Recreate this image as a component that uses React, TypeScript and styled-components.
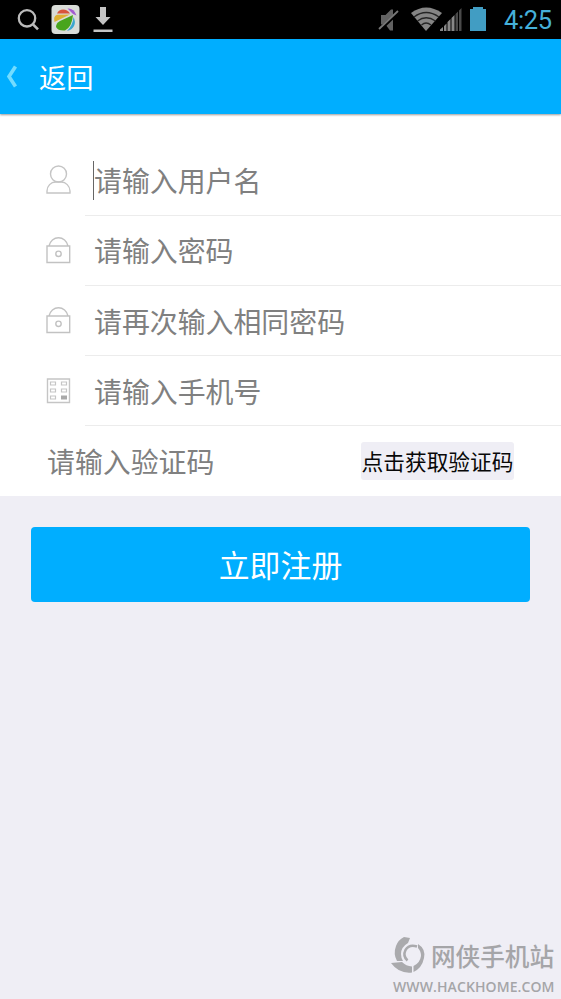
import React from 'react';
import styled, { createGlobalStyle } from 'styled-components';

const GlobalStyle = createGlobalStyle`
  * { box-sizing: border-box; }
  body {
    margin: 0;
    background: #efeef5;
    font-family: "Noto Sans CJK SC", "Noto Sans", sans-serif;
  }
`;

const Screen = styled.div`
  width: 561px;
  height: 999px;
  display: flex;
  flex-direction: column;
  background: #efeef5;
  overflow: hidden;
`;

const StatusBar = styled.div`
  height: 39px;
  flex: none;
  display: flex;
  justify-content: space-between;
  background: #000;
`;

const StatusGroup = styled.div`
  display: flex;
`;

const Clock = styled.span`
  width: 58px;
  padding-left: 1px;
  font: 25.5px/41px Roboto, sans-serif;
  letter-spacing: -0.35px;
  color: #45b0da;
`;

const Header = styled.header`
  height: 75px;
  flex: none;
  display: flex;
  align-items: center;
  background: #00aeff;
  box-shadow: 0 1px 2px rgba(0, 0, 0, 0.4);
  z-index: 1;
`;

const BackIcon = styled.svg`
  width: 39px;
  height: 75px;
  flex: none;
`;

const BackLabel = styled.span`
  padding-bottom: 1px;
  font-size: 27.2px;
  line-height: 74px;
  color: #fff;
`;

const Form = styled.form`
  flex: none;
  margin: 0;
  padding-top: 31px;
  background: #fff;
`;

const Row = styled.div<{ $height: number }>`
  height: ${(p) => p.$height}px;
  display: flex;
`;

const IconCell = styled.div`
  width: 85px;
  flex: none;
  padding: 19px 0 0 44px;
`;

const Field = styled.div`
  flex: 1;
  padding-left: 8px;
  border-bottom: 1px solid #ececec;
  display: flex;
  align-items: center;
`;

const Caret = styled.i`
  width: 1px;
  height: 39px;
  margin-right: -1px;
  background: #666;
`;

const Placeholder = styled.span<{ $lift?: number }>`
  margin-left: 1px;
  padding-bottom: ${(p) => p.$lift ?? 0}px;
  font-size: 27.9px;
  line-height: 40px;
  white-space: nowrap;
  color: #808080;
`;

const CodeRow = styled.div`
  height: 70px;
  display: flex;
  align-items: center;
  justify-content: space-between;
  padding: 0 47px 0 46px;
`;

const CodeButton = styled.button`
  width: 153px;
  height: 38px;
  padding: 0;
  border: 0;
  border-radius: 3px;
  background: #efeef5;
  font-family: inherit;
  font-size: 21.7px;
  line-height: 38px;
  white-space: nowrap;
  color: #080808;
`;

const SubmitButton = styled.button`
  width: 499px;
  height: 75px;
  flex: none;
  margin: 31px 0 0 31px;
  padding: 0 0 2px;
  border: 0;
  border-radius: 4px;
  background: #00aeff;
  font-family: inherit;
  font-size: 30.9px;
  line-height: 73px;
  color: #fff;
`;

const Watermark = styled.footer`
  margin-top: auto;
  height: 66px;
  padding-left: 390px;
  color: #a5a5a8;
`;

const Brand = styled.div`
  height: 43px;
  display: flex;
  align-items: center;
`;

const BrandName = styled.span`
  margin-left: 4px;
  font-size: 24.6px;
  font-weight: 500;
  line-height: 42px;
  white-space: nowrap;
`;

const BrandUrl = styled.div`
  padding-left: 3px;
  font: 600 14px/21px "Open Sans", sans-serif;
  letter-spacing: 0.1px;
  white-space: nowrap;
`;

const LeftStatusIcons = () => (
  <svg width="120" height="39" viewBox="0 0 120 39" fill="none">
    <circle cx="27" cy="18.3" r="8.2" stroke="#bbb" strokeWidth="2.3" />
    <path d="M33 24.3l5 5" stroke="#bbb" strokeWidth="2.6" />
    <rect x="51.5" y="5" width="28" height="29" rx="4" fill="#d9dcd8" />
    <path d="M57 13.500C59 8 67 8 70 13.500Z" fill="#d8543c" />
    <path d="M67.500 8.500Q74 8 76.500 15.500L73 14Z" fill="#a35bd0" />
    <path d="M54.500 22Q53 16 57 14.800L70 14.500Z" fill="#ddb032" />
    <path d="M56 27Q56 23 60 21L73 15Q72 27 65 30.500Q58 31 56 27Z" fill="#48a51d" />
    <path d="M67 31Q73 25 73.500 17Q76 22 74 26Q72 30 67 31Z" fill="#3aa6cf" />
    <path d="M100 7h6v10h4.500l-7.500 8-7.500-8h4.500zM93.500 29.500h19v2.500h-19z" fill="#c4c4c4" />
  </svg>
);

const RightStatusIcons = () => (
  <svg width="125" height="39" viewBox="0 0 125 39" fill="none">
    <path d="M3 15h4.500l5.500-5.500h2v21h-3l-4.500-6H3z" fill="#626262" />
    <path d="M1.500 30l19-18" stroke="#000" strokeWidth="3.500" />
    <path d="M1 29l19-18" stroke="#777" strokeWidth="1.8" />
    <path d="M33 13Q48 2 64 13L48 31z" fill="#858585" />
    <path d="M36 17Q48 8 61 17M39.500 21Q48 14.500 57.500 21M43.500 25Q48 21 53 25" stroke="#252525" strokeWidth="1.3" />
    <path d="M62 31v-1.500l3-2.500v4zM66 31v-5l2.500-2.500V31zM69.500 31v-9l3-3v12zM73.500 31V18l3-3v16z" fill="#888" />
    <path d="M77.500 31V14l2.500-2.500V31zM81 31V10.500l2.500-2.500v23z" fill="#494949" />
    <path d="M92 9h3V7h10v2h3v22H92z" fill="#419dc3" />
  </svg>
);

const UserIcon = () => (
  <svg width="28" height="32" viewBox="0 0 28 32" fill="none" stroke="#c5c5c5" strokeWidth="1.4">
    <circle cx="14.500" cy="10" r="8" />
    <path d="M3 29v-2c0-5 4-9 8.500-9h6c4 0 8.500 4 8.500 9v2z" />
  </svg>
);

const LockIcon = () => (
  <svg width="28" height="32" viewBox="0 0 28 32" fill="none" stroke="#c2c2c2" strokeWidth="1.4">
    <path d="M3 11h22.700v16.500H3zM5 11c1-5 5-8.300 9.500-8.300s8.500 3.300 9.500 8.300" />
    <circle cx="14.500" cy="18.800" r="2.700" />
  </svg>
);

const PhoneIcon = () => (
  <svg width="28" height="32" viewBox="0 0 28 32" fill="none" stroke="#c5c5c5">
    <path d="M3.500 4h22v23.500h-22z" strokeWidth="1.4" />
    <path d="M6.500 7h5v3h-5zM17.500 7h5v3h-5zM6.500 14h5v3h-5zM17.500 14h5v3h-5zM6.500 21h5v3h-5z" strokeWidth="1.2" />
    <path d="M17 20.500h6v4h-6z" fill="#a9a9a9" stroke="none" />
  </svg>
);

const BrandLogo = () => (
  <svg width="37" height="41" viewBox="0 0 37 41" fill="none">
    <path d="M14 3L20 4L18 9Q11 13 11 20Q11 24 13 27L7 27Q3 20 6 12Q8 6 14 3Z" fill="#aaaaad" />
    <path d="M1 29L12 28Q16 32 22 32.500V38.500Q9 40 1 29Z" fill="#aaaaad" />
    <path d="M17.500 26.500Q12.500 22 15.500 16Q19 10 27 12.500" stroke="#aaaaad" strokeWidth="2.500" />
    <path d="M28 10Q36 15 34 24Q32 34 23.500 38V32Q30 29 31 22Q31 17 28 14Z" fill="#aaaaad" />
  </svg>
);

const fields = [
  { text: '请输入用户名', height: 71, lift: 1, Icon: UserIcon, focused: true },
  { text: '请输入密码', height: 70, lift: 2, Icon: LockIcon },
  { text: '请再次输入相同密码', height: 70, lift: 0, Icon: LockIcon },
  { text: '请输入手机号', height: 70, lift: 0, Icon: PhoneIcon },
];

export default function App() {
  return (
    <Screen>
      <GlobalStyle />
      <StatusBar>
        <LeftStatusIcons />
        <StatusGroup>
          <RightStatusIcons />
          <Clock>4:25</Clock>
        </StatusGroup>
      </StatusBar>
      <Header>
        <BackIcon viewBox="0 0 39 75" fill="none">
          <path d="M15.500 27.500L9 37.500l6.500 10" stroke="#73dcff" strokeWidth="3.600" />
        </BackIcon>
        <BackLabel>返回</BackLabel>
      </Header>
      <Form>
        {fields.map(({ text, height, lift, Icon, focused }) => (
          <Row key={text} $height={height}>
            <IconCell>
              <Icon />
            </IconCell>
            <Field>
              {focused && <Caret />}
              <Placeholder $lift={lift}>{text}</Placeholder>
            </Field>
          </Row>
        ))}
        <CodeRow>
          <Placeholder $lift={1}>请输入验证码</Placeholder>
          <CodeButton type="button">点击获取验证码</CodeButton>
        </CodeRow>
      </Form>
      <SubmitButton type="button">立即注册</SubmitButton>
      <Watermark>
        <Brand>
          <BrandLogo />
          <BrandName>网侠手机站</BrandName>
        </Brand>
        <BrandUrl>WWW.HACKHOME.COM</BrandUrl>
      </Watermark>
    </Screen>
  );
}
